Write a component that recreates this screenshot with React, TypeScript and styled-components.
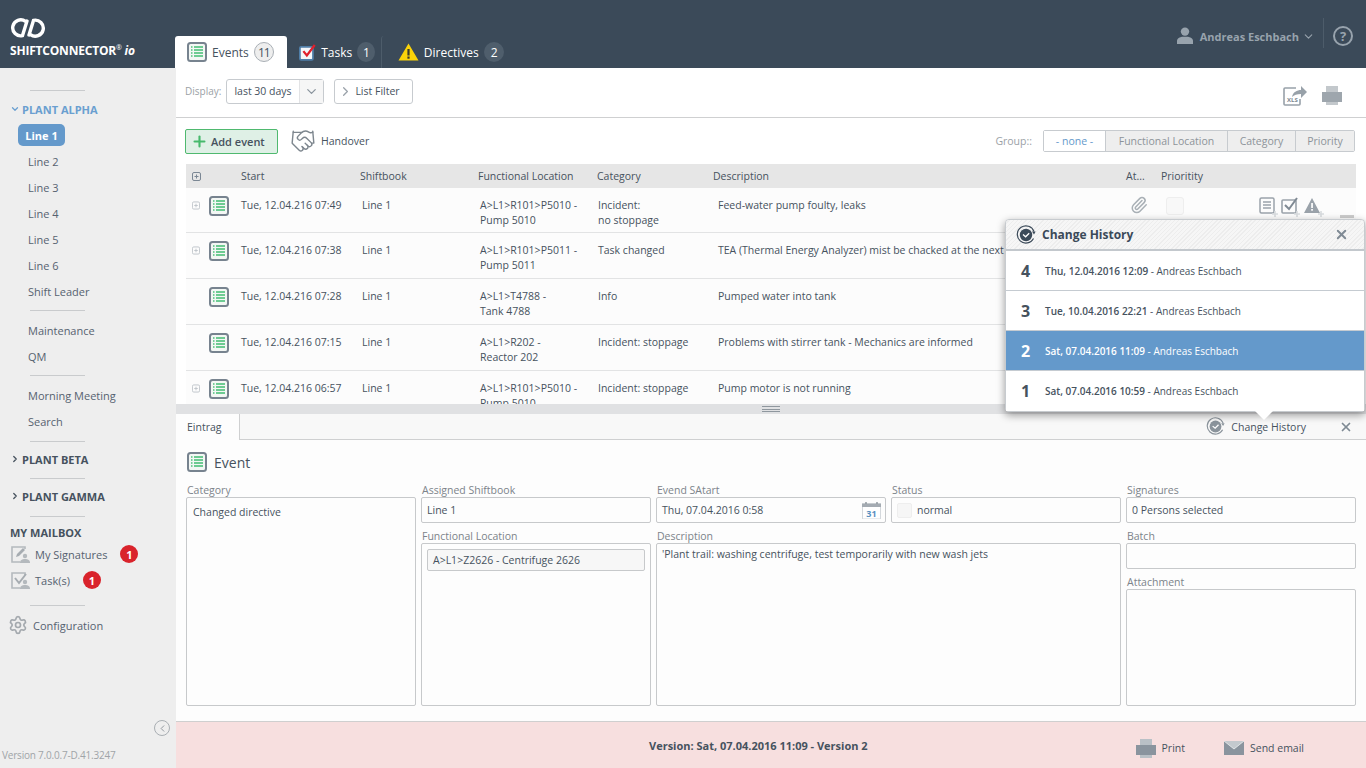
import styled, { createGlobalStyle } from "styled-components";
import { ChevronDown, ChevronRight, ChevronLeft, Paperclip, Handshake, Settings, X, Plus } from "lucide-react";

const GlobalStyle = createGlobalStyle`
  html, body { margin: 0; padding: 0; }
  body {
    font-family: "Open Sans", "Noto Sans", "Liberation Sans", sans-serif;
    font-size: 11px;
    color: #46525e;
    background: #fff;
  }
  * { box-sizing: border-box; }
`;

const ListIcon = ({ size = 20 }: { size?: number }) => (
  <svg width={size} height={size} viewBox="0 0 20 20">
    <rect x="1" y="1" width="18" height="18" rx="2.5" fill="#f3f7f4" stroke="#77838f" strokeWidth="2" />
    {[5, 8, 11, 14].map((y) => (
      <g key={y} stroke="#4cc07a" strokeWidth="1.6">
        <path d={`M4 ${y}h1.5`} />
        <path d={`M7 ${y}h9`} />
      </g>
    ))}
  </svg>
);

const TaskIcon = () => (
  <svg width="20" height="20" viewBox="0 0 20 20">
    <rect x="1" y="4" width="15" height="15" rx="1.5" fill="#f4f7fa" stroke="#4f7ea8" strokeWidth="2" />
    <path d="M5 9l4 5 9-12" fill="none" stroke="#e0202c" strokeWidth="2.6" />
  </svg>
);

const WarnIcon = () => (
  <svg width="21" height="18" viewBox="0 0 21 18">
    <path d="M10.5 0.5L20.5 17.5H0.5Z" fill="#fbd309" />
    <rect x="9.4" y="6" width="2.2" height="6.5" fill="#3b3b2c" />
    <rect x="9.4" y="13.5" width="2.2" height="2.2" fill="#3b3b2c" />
  </svg>
);

const Logo = () => (
  <svg width="36" height="22" viewBox="0 0 36 22">
    <path d="M15.5 4.4A8 8 0 1 0 12.5 18.6L17 4" fill="none" stroke="#fff" strokeWidth="3.4" strokeLinecap="round" />
    <path d="M20.5 17.6A8 8 0 1 0 23.5 3.4L19 18" fill="none" stroke="#fff" strokeWidth="3.4" strokeLinecap="round" />
  </svg>
);

const HistoryIcon = ({ size, color }: { size: number; color: string }) => (
  <svg width={size} height={size} viewBox="0 0 20 20">
    <path d="M17.5 13.5A8.6 8.6 0 1 1 18 6.5" fill="none" stroke={color} strokeWidth="1.2" />
    <path d="M16 6.5h3.6L18 9.4Z" fill={color} />
    <circle cx="10" cy="10" r="6.2" fill={color} />
    <path d="M7 9.6l2.6 2.2 3.6-3.6" fill="none" stroke="#fff" strokeWidth="1.3" />
  </svg>
);

const PrintIcon = ({ dark, light }: { dark: string; light: string }) => (
  <svg width="20" height="19" viewBox="0 0 20 19">
    <rect x="4" y="0" width="12" height="19" fill={light} />
    <rect x="0" y="6" width="20" height="10" fill={dark} />
  </svg>
);

const MailIcon = () => (
  <svg width="20" height="14" viewBox="0 0 20 14">
    <rect width="20" height="14" fill="#8a949e" />
    <path d="M0 0h20L10 8Z" fill="#c3c9ce" />
    <path d="M0 0l10 8L20 0" fill="none" stroke="#eef0f1" strokeWidth="0.8" />
  </svg>
);

const XlsIcon = () => (
  <svg width="25" height="22" viewBox="0 0 25 22">
    <path d="M13 4H2a1 1 0 0 0-1 1v15a1 1 0 0 0 1 1h14a1 1 0 0 0 1-1v-5" fill="none" stroke="#98a1a9" strokeWidth="1.6" />
    <path d="M9 13c1-5 5-7 9-7V2l6 6-6 6V10c-4 0-7 1-9 3Z" fill="#98a1a9" />
    <text x="4" y="18" fontSize="6" fontWeight="700" fill="#7c8791" fontFamily="Open Sans">XLS</text>
  </svg>
);

const SmallDocIcon = () => (
  <svg width="20" height="20" viewBox="0 0 20 20">
    <rect x="1" y="1" width="14" height="15" rx="1.5" fill="none" stroke="#9aa2aa" strokeWidth="1.5" />
    <path d="M4 5h8M4 8h8M4 11h8" stroke="#9aa2aa" strokeWidth="1.3" />
    <path d="M16 14v6M13 17h6" stroke="#d8dbde" strokeWidth="1.6" />
  </svg>
);

const SmallCheckIcon = () => (
  <svg width="20" height="20" viewBox="0 0 20 20">
    <rect x="1" y="3" width="14" height="13" rx="1" fill="none" stroke="#9aa2aa" strokeWidth="1.6" />
    <path d="M4 8l4 4 8-11" fill="none" stroke="#7f8993" strokeWidth="2" />
    <path d="M16 14v6M13 17h6" stroke="#d8dbde" strokeWidth="1.6" />
  </svg>
);

const SmallWarnIcon = () => (
  <svg width="22" height="20" viewBox="0 0 22 20">
    <path d="M9 1l8 15H1Z" fill="#9aa2aa" />
    <rect x="8.2" y="6" width="1.7" height="5" fill="#fff" />
    <rect x="8.2" y="12" width="1.7" height="1.7" fill="#fff" />
    <path d="M18 14v6M15 17h6" stroke="#d8dbde" strokeWidth="1.6" />
  </svg>
);

const SignatureIcon = ({ check }: { check?: boolean }) => (
  <svg width="19" height="17" viewBox="0 0 19 17">
    <path d="M14 3V1H1v15h8" fill="none" stroke="#b4b9bd" strokeWidth="1.6" />
    {check ? (
      <path d="M4 6l4 5 7-9" fill="none" stroke="#a6acb1" strokeWidth="2" />
    ) : (
      <path d="M5 11l1-3 6-6 2 2-6 6Z" fill="#a6acb1" />
    )}
    <circle cx="14" cy="10" r="2.2" fill="#b4b9bd" />
    <path d="M9 17c0-3 2-4 5-4s5 1 5 4Z" fill="#b4b9bd" />
  </svg>
);

const CalendarIcon = () => (
  <svg width="19" height="17" viewBox="0 0 19 17">
    <rect x="0.5" y="2" width="18" height="15" fill="#fff" stroke="#d4d8dc" />
    <rect x="0" y="1.5" width="19" height="3.5" fill="#a4abb2" />
    <path d="M4 0v2M15 0v2" stroke="#8b939a" strokeWidth="1.4" />
    <text x="9.5" y="14.5" textAnchor="middle" fontSize="9" fontWeight="700" fill="#5a8fc0" fontFamily="Open Sans">31</text>
  </svg>
);

const ExpandIcon = ({ dark }: { dark?: boolean }) => (
  <svg width="9" height="9" viewBox="0 0 9 9">
    <rect x="0.5" y="0.5" width="8" height="8" rx="1.5" fill="none" stroke={dark ? "#7b8794" : "#bcc2c8"} />
    <path d="M2.5 4.5h4M4.5 2.5v4" stroke={dark ? "#7b8794" : "#bcc2c8"} />
  </svg>
);

const UserIcon = () => (
  <svg width="16" height="18" viewBox="0 0 16 18">
    <circle cx="8" cy="4.6" r="4.2" fill="#98a3ad" />
    <path d="M0 17v-3c0-3 3-4 5-4.300h6c2 .3 5 1.300 5 4.300v3Z" fill="#98a3ad" />
  </svg>
);

const plantLines = ["Line 2", "Line 3", "Line 4", "Line 5", "Line 6", "Shift Leader"];

const rows = [
  { expand: true, start: "Tue, 12.04.216 07:49", loc: "A>L1>R101>P5010 - Pump 5010", cat: "Incident:\nno stoppage", desc: "Feed-water pump foulty, leaks", tools: true },
  { expand: true, start: "Tue, 12.04.216 07:38", loc: "A>L1>R101>P5011 - Pump 5011", cat: "Task changed", desc: "TEA (Thermal Energy Analyzer) mist be chacked at the next stop" },
  { expand: false, start: "Tue, 12.04.216 07:28", loc: "A>L1>T4788 -\nTank 4788", cat: "Info", desc: "Pumped water into tank" },
  { expand: false, start: "Tue, 12.04.216 07:15", loc: "A>L1>R202 -\nReactor 202", cat: "Incident: stoppage", desc: "Problems with stirrer tank -  Mechanics are informed" },
  { expand: true, start: "Tue, 12.04.216 06:57", loc: "A>L1>R101>P5010 - Pump 5010", cat: "Incident: stoppage", desc: "Pump motor is not running" },
];

const history = [
  { no: 4, text: "Thu, 12.04.2016 12:09", selected: false },
  { no: 3, text: "Tue, 10.04.2016 22:21", selected: false },
  { no: 2, text: "Sat, 07.04.2016 11:09", selected: true },
  { no: 1, text: "Sat, 07.04.2016 10:59", selected: false },
];

const App = () => {
  return (
    <Page>
      <GlobalStyle />
      <Header>
        <Brand>
          <Logo />
          <BrandName>
            SHIFTCONNECTOR<BrandMark>®</BrandMark> <BrandIo>io</BrandIo>
          </BrandName>
        </Brand>
        <Tabs>
          <Tab $active>
            <ListIcon />
            Events
            <Count $active>11</Count>
          </Tab>
          <Tab $width={94}>
            <TaskIcon />
            Tasks
            <Count>1</Count>
          </Tab>
          <Tab $divider>
            <WarnIcon />
            Directives
            <Count>2</Count>
          </Tab>
        </Tabs>
        <UserArea>
          <UserIcon />
          <UserName>Andreas Eschbach</UserName>
          <ChevronDown size={13} color="#98a3ad" />
          <HelpButton>?</HelpButton>
        </UserArea>
      </Header>

      <Body>
        <Sidebar>
          <SideRule $top={22} $bottom={10} />
          <PlantTitle $open>
            <ChevronDown size={10} strokeWidth={3} />
            PLANT ALPHA
          </PlantTitle>
          <ActiveLine>Line 1</ActiveLine>
          {plantLines.map((line) => (
            <SideLink key={line}>{line}</SideLink>
          ))}
          <SideRule $top={6} $bottom={6} />
          <SideLink>Maintenance</SideLink>
          <SideLink>QM</SideLink>
          <SideRule $top={6} $bottom={6} />
          <SideLink>Morning Meeting</SideLink>
          <SideLink>Search</SideLink>
          <SideRule $top={7} $bottom={9} />
          <PlantTitle>
            <ChevronRight size={10} strokeWidth={3} />
            PLANT BETA
          </PlantTitle>
          <SideRule $top={11} $bottom={9} />
          <PlantTitle>
            <ChevronRight size={10} strokeWidth={3} />
            PLANT GAMMA
          </PlantTitle>
          <SideRule $top={12} $bottom={8} />
          <MailboxTitle>MY MAILBOX</MailboxTitle>
          <MailItem>
            <SignatureIcon />
            My Signatures
            <RedBadge>1</RedBadge>
          </MailItem>
          <MailItem>
            <SignatureIcon check />
            Task(s)
            <RedBadge>1</RedBadge>
          </MailItem>
          <SideRule $top={12} $bottom={8} />
          <ConfigItem>
            <Settings size={20} color="#a4a9ae" strokeWidth={2} />
            Configuration
          </ConfigItem>
          <CollapseRow>
            <CollapseButton>
              <ChevronLeft size={11} strokeWidth={2} />
            </CollapseButton>
          </CollapseRow>
          <VersionText>Version 7.0.0.7-D.41.3247</VersionText>
        </Sidebar>

        <Main>
          <DisplayBar>
            <FilterLabel>Display:</FilterLabel>
            <RangeSelect>
              <RangeValue>last 30 days</RangeValue>
              <RangeArrow>
                <ChevronDown size={15} color="#8a949d" />
              </RangeArrow>
            </RangeSelect>
            <ListFilter>
              <ChevronRight size={15} color="#9aa2aa" />
              List Filter
            </ListFilter>
            <BarIcons>
              <XlsIcon />
              <PrintIcon dark="#9ea6ad" light="#c3c8cc" />
            </BarIcons>
          </DisplayBar>

          <ActionBar>
            <AddButton>
              <Plus size={17} color="#46b96c" strokeWidth={3} />
              Add event
            </AddButton>
            <HandoverLink>
              <Handshake size={26} color="#7d868e" strokeWidth={1.3} />
              Handover
            </HandoverLink>
            <GroupLabel>Group::</GroupLabel>
            <GroupSwitch>
              <GroupOption $active $width={61}>- none -</GroupOption>
              <GroupOption $width={122}>Functional Location</GroupOption>
              <GroupOption $width={68}>Category</GroupOption>
              <GroupOption $width={59}>Priority</GroupOption>
            </GroupSwitch>
          </ActionBar>

          <TableWrap>
            <HeadRow>
              <HeadExpand>
                <ExpandIcon dark />
              </HeadExpand>
              <span>Start</span>
              <span>Shiftbook</span>
              <span>Functional Location</span>
              <span>Category</span>
              <span>Description</span>
              <span>At...</span>
              <span>Prioritity</span>
            </HeadRow>
            {rows.map((row) => (
              <Row key={row.start}>
                <RowIcons>
                  <ExpandSlot>{row.expand && <ExpandIcon />}</ExpandSlot>
                  <ListIcon />
                </RowIcons>
                <Cell>{row.start}</Cell>
                <Cell $indent={2}>Line 1</Cell>
                <Cell $indent={2}>{row.loc}</Cell>
                <Cell $indent={1}>{row.cat}</Cell>
                <Cell $indent={5}>{row.desc}</Cell>
                {row.tools ? (
                  <>
                    <ClipCell>
                      <Paperclip size={18} color="#a9b0b6" />
                    </ClipCell>
                    <PriorityBox />
                    <RowTools>
                      <SmallDocIcon />
                      <SmallCheckIcon />
                      <SmallWarnIcon />
                      <MinusBar />
                    </RowTools>
                  </>
                ) : null}
              </Row>
            ))}
          </TableWrap>

          <Splitter>
            <Grip />
          </Splitter>

          <Detail>
            <DetailTabs>
              <DetailTab>Eintrag</DetailTab>
              <HistoryLink>
                <HistoryIcon size={19} color="#8a939b" />
                Change History
              </HistoryLink>
              <DetailClose>
                <X size={14} strokeWidth={3} />
              </DetailClose>
            </DetailTabs>
            <DetailTitle>
              <ListIcon />
              Event
            </DetailTitle>
            <FormGrid>
              <Field $rows={2}>
                <FieldLabel>Category</FieldLabel>
                <TextArea>Changed directive</TextArea>
              </Field>
              <Field>
                <FieldLabel>Assigned Shiftbook</FieldLabel>
                <InputBox>Line 1</InputBox>
              </Field>
              <Field>
                <FieldLabel>Evend SAtart</FieldLabel>
                <InputBox>
                  Thu, 07.04.2016 0:58
                  <CalendarSlot>
                    <CalendarIcon />
                  </CalendarSlot>
                </InputBox>
              </Field>
              <Field>
                <FieldLabel>Status</FieldLabel>
                <InputBox>
                  <StatusSwatch />
                  normal
                </InputBox>
              </Field>
              <Field>
                <FieldLabel>Signatures</FieldLabel>
                <InputBox>0 Persons selected</InputBox>
              </Field>
              <Field>
                <FieldLabel>Functional Location</FieldLabel>
                <TextArea $tight>
                  <LocationChip>A&gt;L1&gt;Z2626 - Centrifuge 2626</LocationChip>
                </TextArea>
              </Field>
              <Field $cols={2}>
                <FieldLabel>Description</FieldLabel>
                <TextArea $desc>'Plant trail: washing centrifuge, test temporarily with new wash jets</TextArea>
              </Field>
              <SideFields>
                <Field>
                  <FieldLabel>Batch</FieldLabel>
                  <InputBox />
                </Field>
                <Field $fill>
                  <FieldLabel>Attachment</FieldLabel>
                  <TextArea />
                </Field>
              </SideFields>
            </FormGrid>
          </Detail>

          <VersionBar>
            <VersionTitle>Version: Sat, 07.04.2016 11:09 - Version 2</VersionTitle>
            <VersionActions>
              <VersionAction>
                <PrintIcon dark="#8a949e" light="#b9c0c6" />
                Print
              </VersionAction>
              <VersionAction>
                <MailIcon />
                Send email
              </VersionAction>
            </VersionActions>
          </VersionBar>

          <HistoryPopup>
            <PopupHead>
              <HistoryIcon size={20} color="#3b4a59" />
              <PopupTitle>Change History</PopupTitle>
              <PopupClose>
                <X size={15} strokeWidth={3} />
              </PopupClose>
            </PopupHead>
            {history.map((item) => (
              <HistoryRow key={item.no} $selected={item.selected}>
                <HistoryNo>{item.no}</HistoryNo>
                <span>
                  <strong>{item.text}</strong> - Andreas Eschbach
                </span>
              </HistoryRow>
            ))}
            <PopupArrow />
          </HistoryPopup>
        </Main>
      </Body>
    </Page>
  );
};

const Page = styled.div`
  display: flex;
  flex-direction: column;
  width: 1366px;
  height: 768px;
  overflow: hidden;
`;

const Header = styled.header`
  display: flex;
  height: 68px;
  flex: none;
  background: #3b4a59;
`;
const Brand = styled.div`
  display: flex;
  flex-direction: column;
  width: 175px;
  padding: 17px 0 0 10px;
`;
const BrandName = styled.div`
  margin-top: 3px;
  color: #fff;
  font-size: 12px;
  font-weight: 700;
  letter-spacing: -0.2px;
  white-space: nowrap;
`;
const BrandMark = styled.sup`
  font-size: 7px;
  font-weight: 400;
  line-height: 0;
`;
const BrandIo = styled.i`
  font-size: 12px;
`;
const Tabs = styled.nav`
  display: flex;
  align-items: flex-end;
`;
const Tab = styled.div<{ $active?: boolean; $divider?: boolean; $width?: number }>`
  display: flex;
  align-items: center;
  gap: 5px;
  height: 32px;
  padding: 0 ${(p) => (p.$active ? "13px 0 12px" : "6px 0 12px")};
  width: ${(p) => (p.$width ? `${p.$width}px` : "auto")};
  margin-left: ${(p) => (p.$divider ? "0" : "0")};
  font-size: 12px;
  color: ${(p) => (p.$active ? "#46525e" : "#fff")};
  background: ${(p) => (p.$active ? "#fff" : "transparent")};
  border-radius: 3px 3px 0 0;
  border-left: ${(p) => (p.$divider ? "1px solid #4d5c6a" : "none")};
  margin-top: 0;
  padding-left: ${(p) => (p.$divider ? "16px" : p.$active ? "12px" : "12px")};
`;
const Count = styled.span<{ $active?: boolean }>`
  display: flex;
  align-items: center;
  justify-content: center;
  width: 20px;
  height: 20px;
  border-radius: 50%;
  font-size: 12px;
  letter-spacing: -1px;
  color: ${(p) => (p.$active ? "#46525e" : "#fff")};
  background: ${(p) => (p.$active ? "#eeeeee" : "#4f5e6c")};
  border: ${(p) => (p.$active ? "1px solid #a9afb5" : "none")};
`;
const UserArea = styled.div`
  display: flex;
  align-items: center;
  margin-left: auto;
  padding-right: 13px;
  height: 74px;
  margin-top: -1px;
`;
const UserName = styled.span`
  margin: 0 3px 0 7px;
  color: #98a3ad;
  font-size: 11px;
  font-weight: 700;
`;
const HelpButton = styled.span`
  display: flex;
  align-items: center;
  justify-content: center;
  width: 20px;
  height: 20px;
  margin-left: 18px;
  border: 2px solid #98a3ad;
  border-radius: 50%;
  color: #98a3ad;
  font-size: 13px;
  font-weight: 700;
  position: relative;
  &::before {
    content: "";
    position: absolute;
    left: -12px;
    top: -10px;
    height: 30px;
    border-left: 1px solid #4d5c6a;
  }
`;

const Body = styled.div`
  display: flex;
  flex: 1;
  min-height: 0;
`;

const Sidebar = styled.aside`
  display: flex;
  flex-direction: column;
  width: 176px;
  flex: none;
  background: #eeeeee;
`;
const SideRule = styled.hr<{ $top: number; $bottom: number }>`
  width: 55px;
  height: 1px;
  margin: ${(p) => p.$top}px 0 ${(p) => p.$bottom}px 30px;
  border: 0;
  background: #c9cbcd;
`;
const PlantTitle = styled.div<{ $open?: boolean }>`
  display: flex;
  align-items: center;
  gap: 2px;
  height: 16px;
  padding-left: 10px;
  font-size: 11px;
  font-weight: 700;
  color: ${(p) => (p.$open ? "#6a9fd0" : "#46525e")};
`;
const ActiveLine = styled.div`
  display: flex;
  align-items: center;
  justify-content: center;
  width: 47px;
  height: 22px;
  margin: 7px 0 2px 18px;
  border-radius: 5px;
  background: #6499cb;
  color: #fff;
  font-weight: 700;
`;
const SideLink = styled.div`
  display: flex;
  align-items: center;
  height: 26px;
  padding-left: 28px;
  color: #566270;
`;
const MailboxTitle = styled.div`
  height: 16px;
  padding-left: 10px;
  font-weight: 700;
  color: #46525e;
`;
const MailItem = styled.div`
  display: flex;
  align-items: center;
  gap: 5px;
  height: 26px;
  padding-left: 11px;
  color: #566270;
  &:first-of-type {
    margin-top: 4px;
  }
`;
const RedBadge = styled.span`
  display: flex;
  align-items: center;
  justify-content: center;
  width: 18px;
  height: 18px;
  margin-left: 8px;
  border-radius: 50%;
  background: #d9232b;
  color: #fff;
  font-weight: 700;
`;
const ConfigItem = styled.div`
  display: flex;
  align-items: center;
  gap: 5px;
  height: 22px;
  padding-left: 8px;
  color: #566270;
`;
const CollapseRow = styled.div`
  display: flex;
  justify-content: flex-end;
  margin-top: auto;
  padding: 0 6px 12px 0;
`;
const CollapseButton = styled.span`
  display: flex;
  align-items: center;
  justify-content: center;
  width: 16px;
  height: 16px;
  border: 1px solid #a9aeb3;
  border-radius: 50%;
  color: #8a9198;
`;
const VersionText = styled.div`
  height: 20px;
  padding-left: 2px;
  font-size: 10px;
  letter-spacing: -0.2px;
  color: #a0a4a8;
`;

const Main = styled.main`
  position: relative;
  display: flex;
  flex-direction: column;
  flex: 1;
  min-width: 0;
`;

const DisplayBar = styled.div`
  display: flex;
  align-items: center;
  gap: 5px;
  height: 50px;
  flex: none;
  padding: 5px 24px 8px 9px;
  border-bottom: 1px solid #cfd0d1;
`;
const FilterLabel = styled.span`
  color: #9ba1a6;
  font-size: 10px;
`;
const RangeSelect = styled.div`
  display: flex;
  width: 98px;
  height: 25px;
  border: 1px solid #c7cbcf;
  border-radius: 3px;
`;
const RangeValue = styled.span`
  display: flex;
  align-items: center;
  flex: 1;
  padding-left: 7px;
  font-size: 10.500px;
`;
const RangeArrow = styled.span`
  display: flex;
  align-items: center;
  justify-content: center;
  width: 24px;
  background: #f6f6f6;
  border-left: 1px solid #e2e3e5;
`;
const ListFilter = styled.span`
  display: flex;
  align-items: center;
  gap: 2px;
  width: 79px;
  height: 25px;
  margin-left: 5px;
  padding-left: 3px;
  border: 1px solid #c7cbcf;
  border-radius: 3px;
  font-size: 10.500px;
`;
const BarIcons = styled.div`
  display: flex;
  align-items: center;
  gap: 14px;
  margin: 8px 0 0 auto;
`;

const ActionBar = styled.div`
  display: flex;
  align-items: center;
  height: 46px;
  flex: none;
  padding: 0 11px 0 9px;
`;
const AddButton = styled.span`
  display: flex;
  align-items: center;
  gap: 3px;
  width: 93px;
  height: 25px;
  padding-left: 5px;
  border: 1px solid #4fb96f;
  border-radius: 2px;
  background: #dff0e6;
  font-weight: 600;
`;
const HandoverLink = styled.span`
  display: flex;
  align-items: center;
  gap: 5px;
  margin-left: 12px;
  font-size: 10.500px;
`;
const GroupLabel = styled.span`
  margin: 0 11px 0 auto;
  color: #9ba1a6;
  font-size: 10.500px;
`;
const GroupSwitch = styled.div`
  display: flex;
  height: 22px;
  border: 1px solid #c7cbcf;
  border-radius: 2px;
`;
const GroupOption = styled.span<{ $active?: boolean; $width: number }>`
  display: flex;
  align-items: center;
  justify-content: center;
  width: ${(p) => p.$width}px;
  font-size: 10.500px;
  background: ${(p) => (p.$active ? "#fff" : "#eeeeee")};
  color: ${(p) => (p.$active ? "#6499cb" : "#8d9399")};
  border-left: ${(p) => (p.$active ? "none" : "1px solid #c7cbcf")};
`;

const rowColumns = "55px 119px 118px 119px 116px 413px 35px 1fr";

const TableWrap = styled.div`
  height: 240px;
  flex: none;
  margin: 0 10px;
  overflow: hidden;
`;
const HeadRow = styled.div`
  display: grid;
  grid-template-columns: ${rowColumns};
  align-items: center;
  height: 24px;
  background: #e6e6e6;
  font-size: 10.500px;
`;
const HeadExpand = styled.span`
  display: flex;
  padding-left: 6px;
`;
const Row = styled.div`
  position: relative;
  display: grid;
  grid-template-columns: ${rowColumns};
  height: 46px;
  padding-top: 10px;
  background: #fcfcfc;
  border-bottom: 1px solid #e2e3e4;
  font-size: 10.500px;
  line-height: 15px;
  &:nth-child(2) {
    height: 45px;
  }
`;
const RowIcons = styled.div`
  display: flex;
  align-items: flex-start;
  gap: 9px;
  padding-left: 6px;
  margin-top: -2px;
`;
const ExpandSlot = styled.span`
  display: flex;
  width: 8px;
  padding-top: 5px;
`;
const Cell = styled.div<{ $indent?: number }>`
  padding-left: ${(p) => p.$indent ?? 0}px;
  padding-right: 6px;
  white-space: pre-line;
`;
const ClipCell = styled.span`
  padding-left: 4px;
  margin-top: -2px;
`;
const PriorityBox = styled.span`
  width: 18px;
  height: 18px;
  margin: -1px 0 0 5px;
  border: 1px solid #eeeeee;
  border-radius: 3px;
  background: #f8f8f8;
`;
const RowTools = styled.div`
  position: absolute;
  top: 9px;
  right: 0;
  display: flex;
  gap: 2px;
`;
const MinusBar = styled.span`
  width: 14px;
  height: 3px;
  margin: 18px 2px 0 13px;
  background: #cccccc;
`;

const Splitter = styled.div`
  display: flex;
  align-items: center;
  justify-content: center;
  height: 10px;
  flex: none;
  background: #e0e1e3;
`;
const Grip = styled.span`
  width: 18px;
  height: 6px;
  border-top: 1px solid #8f979e;
  border-bottom: 1px solid #8f979e;
  position: relative;
  &::after {
    content: "";
    position: absolute;
    left: 0;
    right: 0;
    top: 1.500px;
    border-top: 1px solid #8f979e;
  }
`;

const Detail = styled.section`
  display: flex;
  flex-direction: column;
  flex: 1;
  min-height: 0;
  background: #fdfdfd;
`;
const DetailTabs = styled.div`
  display: flex;
  align-items: center;
  height: 26px;
  flex: none;
  border-bottom: 1px solid #cfd0d1;
  background: #f8f8f8;
`;
const DetailTab = styled.span`
  display: flex;
  align-items: center;
  width: 64px;
  height: 26px;
  padding-left: 11px;
  font-size: 10.500px;
  background: #fdfdfd;
  border-right: 1px solid #cfd0d1;
`;
const HistoryLink = styled.span`
  display: flex;
  align-items: center;
  gap: 6px;
  margin-left: auto;
  font-size: 10.500px;
`;
const DetailClose = styled.span`
  display: flex;
  margin: 0 13px 0 33px;
  color: #7f8a94;
`;
const DetailTitle = styled.h2`
  display: flex;
  align-items: center;
  gap: 7px;
  height: 44px;
  margin: 0;
  padding: 0 0 0 11px;
  font-size: 14px;
  font-weight: 400;
  color: #46525e;
`;
const FormGrid = styled.div`
  display: grid;
  grid-template-columns: repeat(5, 230px);
  grid-template-rows: 39px 176px;
  gap: 7px 5px;
  padding-left: 10px;
`;
const Field = styled.div<{ $rows?: number; $cols?: number; $fill?: boolean }>`
  display: flex;
  flex-direction: column;
  min-height: 0;
  ${(p) => (p.$rows ? `grid-row: span ${p.$rows};` : "")}
  ${(p) => (p.$cols ? `grid-column: span ${p.$cols};` : "")}
  ${(p) => (p.$fill ? "flex: 1;" : "")}
`;
const FieldLabel = styled.label`
  height: 13px;
  line-height: 13px;
  padding-left: 1px;
  font-size: 10.500px;
  color: #7c838a;
`;
const InputBox = styled.div`
  display: flex;
  align-items: center;
  height: 26px;
  padding: 0 4px 0 5px;
  border: 1px solid #c7c9cb;
  border-radius: 2px;
  font-size: 10.500px;
`;
const TextArea = styled.div<{ $tight?: boolean; $desc?: boolean }>`
  flex: 1;
  padding: ${(p) => (p.$tight ? "5px" : p.$desc ? "3px 5px" : "7px 6px")};
  border: 1px solid #c7c9cb;
  border-radius: 2px;
  font-size: 10.500px;
`;
const CalendarSlot = styled.span`
  display: flex;
  margin-left: auto;
`;
const StatusSwatch = styled.span`
  width: 15px;
  height: 15px;
  margin: 0 5px 0 0;
  border: 1px solid #eeeeee;
  border-radius: 2px;
  background: #f6f6f6;
`;
const LocationChip = styled.div`
  display: flex;
  align-items: center;
  height: 22px;
  padding-left: 5px;
  border: 1px solid #c7c9cb;
  border-radius: 2px;
  background: #f7f7f7;
`;
const SideFields = styled.div`
  display: flex;
  flex-direction: column;
  gap: 7px;
`;

const VersionBar = styled.footer`
  display: flex;
  align-items: center;
  height: 47px;
  flex: none;
  padding: 0 62px 0 473px;
  background: #f7dfdf;
  border-top: 1px solid #cfcfcf;
`;
const VersionTitle = styled.strong`
  font-size: 11px;
`;
const VersionActions = styled.div`
  display: flex;
  gap: 39px;
  margin: 6px 0 0 auto;
`;
const VersionAction = styled.span`
  display: flex;
  align-items: center;
  gap: 6px;
  font-size: 10.500px;
`;

const HistoryPopup = styled.div`
  position: absolute;
  top: 151px;
  right: 1px;
  width: 360px;
  background: #fff;
  border: 1px solid #c7cbcf;
  border-radius: 4px;
  box-shadow: 0 3px 8px rgba(0, 0, 0, 0.4);
`;
const PopupHead = styled.div`
  display: flex;
  align-items: center;
  gap: 6px;
  height: 31px;
  padding: 0 15px 0 10px;
  border-bottom: 2px solid #c3c8cd;
  border-radius: 4px 4px 0 0;
  background: repeating-linear-gradient(135deg, #f6f6f6, #f6f6f6 2px, #ededed 2px, #ededed 3px);
`;
const PopupTitle = styled.span`
  font-size: 12px;
  font-weight: 700;
  color: #3b4a59;
`;
const PopupClose = styled.span`
  display: flex;
  margin-left: auto;
  color: #7f8a94;
`;
const HistoryRow = styled.div<{ $selected?: boolean }>`
  display: flex;
  align-items: center;
  height: 40px;
  padding-left: 15px;
  font-size: 10px;
  border-bottom: 1px solid #c5cbd1;
  background: ${(p) => (p.$selected ? "#6499cb" : "#fff")};
  color: ${(p) => (p.$selected ? "#fff" : "#46525e")};
  &:last-of-type {
    border-bottom: 0;
  }
  strong {
    font-weight: 600;
  }
`;
const HistoryNo = styled.span`
  width: 24px;
  font-size: 16px;
  font-weight: 700;
`;
const PopupArrow = styled.span`
  position: absolute;
  left: 249px;
  bottom: -9px;
  width: 0;
  height: 0;
  border-left: 9px solid transparent;
  border-right: 9px solid transparent;
  border-top: 9px solid #fff;
`;

export default App;
